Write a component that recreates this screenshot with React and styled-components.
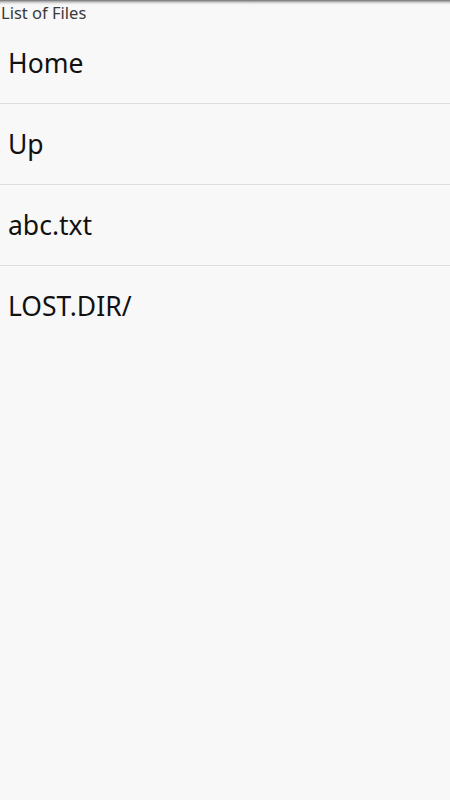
import React from 'react';
import styled, { createGlobalStyle } from 'styled-components';

const GlobalStyle = createGlobalStyle`
  html, body {
    margin: 0;
    padding: 0;
    height: 100%;
    background: #f8f8f8;
  }
  #root {
    min-height: 100%;
  }
`;

const Screen = styled.div`
  min-height: 800px;
  background: #f8f8f8;
  font-family: "Noto Sans", "Open Sans", sans-serif;
  position: relative;
`;

const TopShadow = styled.div`
  position: absolute;
  top: 0;
  left: 0;
  right: 0;
  height: 5px;
  background: linear-gradient(to bottom, #6e6e6e 0%, #b8b8b8 35%, #e6e6e6 70%, rgba(248, 248, 248, 0) 100%);
  pointer-events: none;
`;

const Title = styled.div`
  height: 23px;
  display: flex;
  align-items: flex-end;
  padding-left: 1px;
  font-size: 16.5px;
  line-height: 20px;
  color: #3a3a3a;
`;

const FileList = styled.ul`
  list-style: none;
  margin: 0;
  padding: 0;
`;

const FileItem = styled.li`
  height: 80px;
  display: flex;
  align-items: center;
  padding-left: 8px;
  font-size: 26.5px;
  color: #111;
  border-bottom: 1px solid ${({ $last }) => ($last ? 'transparent' : '#dcdcdc')};
`;

const files = ['Home', 'Up', 'abc.txt', 'LOST.DIR/'];

const App = () => (
  <Screen>
    <GlobalStyle />
    <TopShadow />
    <Title>List of Files</Title>
    <FileList>
      {files.map((name, i) => (
        <FileItem key={name} $last={i === files.length - 1}>
          {name}
        </FileItem>
      ))}
    </FileList>
  </Screen>
);

export default App;
